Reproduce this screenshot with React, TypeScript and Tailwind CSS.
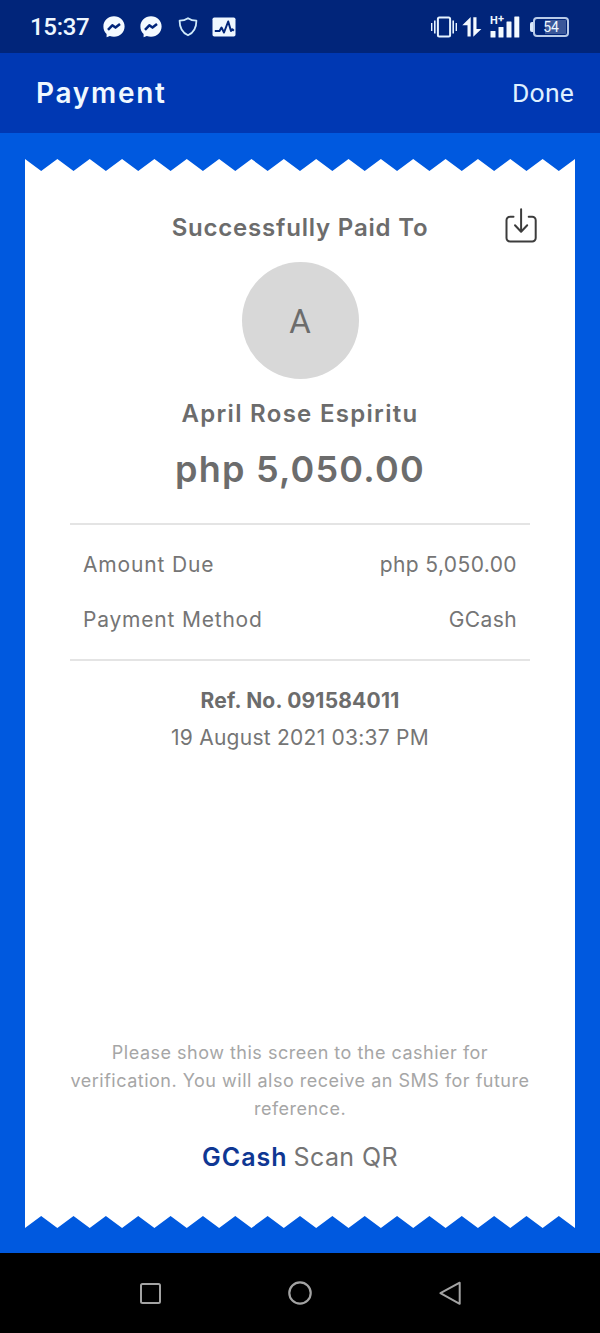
import type { ReactNode } from 'react';

const TEETH = 17;
const CARD_WIDTH = 550;
const TOOTH_HEIGHT = 12;

const details = [
  { label: 'Amount Due', value: 'php 5,050.00', labelClass: 'tracking-[0.85px]', valueClass: 'tracking-[0.4px]' },
  { label: 'Payment Method', value: 'GCash', labelClass: 'tracking-[0.8px]', valueClass: 'tracking-[0.4px]' },
];

function MessengerIcon() {
  return (
    <svg width="22" height="22" viewBox="0 0 22 22">
      <path d="M11 0.3C4.9 0.3 0.4 4.7 0.4 10.5c0 3.1 1.2 5.6 3.2 7.4v3.4l3.2-1.2c1.3.4 2.7.6 4.2.6 6.1 0 10.6-4.4 10.6-10.2S17.1 0.3 11 0.3z" fill="#f4faff" />
      <path d="M5 13.800L9.300 9.300l3.200 2.300 4.500-3.600" fill="none" stroke="#01257a" strokeWidth="2.500" strokeLinejoin="round" />
    </svg>
  );
}

function ShieldIcon() {
  return (
    <svg width="20" height="20" viewBox="0 0 20 20" fill="none" stroke="#cfeafa" strokeWidth="1.800" strokeLinejoin="round">
      <path d="M10 1.200C7.500 3 4.700 3.700 1.600 3.700c0 6.300 1.900 11.600 8.400 14.600 6.500-3 8.400-8.300 8.400-14.600C15.300 3.700 12.500 3 10 1.200z" />
    </svg>
  );
}

function ActivityIcon() {
  return (
    <svg width="24" height="20" viewBox="0 0 24 20">
      <rect x="0.500" y="0.500" width="23" height="19" rx="1.800" fill="#eef7ff" />
      <path d="M2.800 14H7.500L9.500 10.500L12 15.500L16.200 4.500L19 14L20.300 12.200L21.800 13.800" fill="none" stroke="#01257a" strokeWidth="2" strokeLinejoin="round" />
    </svg>
  );
}

function VibrateIcon() {
  return (
    <svg width="28" height="22" viewBox="0 0 28 22" fill="none" stroke="#e6f3ff">
      <rect x="7.900" y="1.400" width="12.200" height="19" rx="1.500" strokeWidth="2" />
      <path d="M4.800 4.500v13M23.200 4.500v13" strokeWidth="1.600" />
      <path d="M1.700 7v8M26.300 7v8" strokeWidth="1.400" />
    </svg>
  );
}

function DataArrowsIcon() {
  return (
    <svg width="20" height="20" viewBox="0 0 20 20" fill="#f4faff">
      <path d="M8.700 0v19.500H5.500V8.300H0.300z" />
      <path d="M11.300 0.300h3.200V12h4.900L11.300 19.800z" />
    </svg>
  );
}

function SignalIcon() {
  return (
    <div className="relative h-[22px] w-[30px]">
      <svg width="30" height="22" viewBox="0 0 30 22" fill="#f4faff">
        <rect x="0.500" y="15" width="5" height="6.500" rx="0.500" />
        <rect x="8.500" y="11" width="5" height="10.500" rx="0.500" />
        <rect x="16.500" y="5.500" width="5" height="16" rx="0.500" />
        <rect x="24.300" y="0.500" width="5" height="21" rx="0.500" />
      </svg>
      <span className="absolute left-0 top-[-1px] text-[11px] leading-[11px] font-bold">H</span>
      <span className="absolute left-[8px] top-[-3px] text-[11px] leading-[11px] font-bold">+</span>
    </div>
  );
}

function BatteryIcon() {
  return (
    <div className="flex items-center">
      <span className="h-[10px] w-[3px] rounded-l-xs bg-[#dbe9fb]" />
      <div className="flex h-[20px] w-[36px] items-center justify-center rounded-[4px] border-2 border-[#b9cbe8] p-px">
        <span className="flex h-full w-full items-center justify-center bg-linear-to-r from-[#01257a] from-30% via-[#3a5799] via-30% to-[#3a5799] text-[14px] leading-none">
          54
        </span>
      </div>
    </div>
  );
}

function DownloadIcon() {
  return (
    <svg width="32" height="36" viewBox="0 0 32 36" fill="none" stroke="#3c3c3c" strokeWidth="2" strokeLinecap="round">
      <path d="M8.500 8.800H5A3.500 3.500 0 0 0 1.500 12.300V30A3.500 3.500 0 0 0 5 33.500H27.200A3.500 3.500 0 0 0 30.700 30V12.300A3.500 3.500 0 0 0 27.200 8.800H23.700" />
      <path d="M16.100 1.200V23.500M10 17.300L16.100 23.700L22.200 17.300" strokeLinejoin="round" />
    </svg>
  );
}

// Torn paper edge along the top or bottom of the receipt
function ZigZag({ flip = false }: { flip?: boolean }) {
  const step = CARD_WIDTH / TEETH;
  const points = [`0,${TOOTH_HEIGHT + 1}`, '0,0'];
  for (let i = 0; i < TEETH; i++) {
    points.push(`${(i + 0.5) * step},${TOOTH_HEIGHT}`, `${(i + 1) * step},0`);
  }
  points.push(`${CARD_WIDTH},${TOOTH_HEIGHT + 1}`);

  return (
    <svg
      className={flip ? 'block shrink-0 rotate-180' : 'block shrink-0'}
      width={CARD_WIDTH}
      height={TOOTH_HEIGHT + 1}
    >
      <polygon points={points.join(' ')} fill="#ffffff" />
    </svg>
  );
}

function StatusBar() {
  return (
    <div className="flex h-[53px] shrink-0 items-center justify-between bg-[#01257a] pr-[31px] pl-[30px] font-[Roboto,sans-serif] text-[#eef7ff]">
      <div className="flex items-center">
        <span className="w-[73px] pt-px text-2xl font-medium tracking-[-0.300px]">15:37</span>
        <MessengerIcon />
        <span className="w-[15px]" />
        <MessengerIcon />
        <span className="w-[16px]" />
        <ShieldIcon />
        <span className="w-[14px]" />
        <ActivityIcon />
      </div>
      <div className="flex items-center">
        <VibrateIcon />
        <span className="w-[4px]" />
        <DataArrowsIcon />
        <span className="w-[8px]" />
        <SignalIcon />
        <span className="w-[10px]" />
        <BatteryIcon />
      </div>
    </div>
  );
}

function Header() {
  return (
    <header className="flex h-20 shrink-0 items-center justify-between bg-[#0038b3] pr-[26px] pl-[36px] text-[#f0f8ff]">
      <h1 className="pb-px text-[28px] font-semibold tracking-[1.700px]">Payment</h1>
      <button className="font-[Roboto,sans-serif] text-[26.500px] tracking-[0.200px] text-[#dff0ff]">Done</button>
    </header>
  );
}

function Centered({ className, children }: { className: string; children: ReactNode }) {
  return <p className={`text-center whitespace-nowrap ${className}`}>{children}</p>;
}

function Receipt() {
  return (
    <main className="flex flex-1 flex-col bg-[#0059df] px-[25px] pt-[26px] pb-[25px]">
      <ZigZag />
      <div className="flex flex-1 flex-col bg-white px-[45px] text-[#6c6c6c]">
        <div className="relative pt-[40px]">
          <Centered className="text-2xl leading-[32px] font-semibold tracking-[0.800px]">Successfully Paid To</Centered>
          <button className="absolute top-[36px] right-[-7px]">
            <DownloadIcon />
          </button>
        </div>

        <div className="mx-auto mt-[18px] flex size-[117px] items-center justify-center rounded-full bg-[#d8d8d8] pt-[3px] font-[Roboto,sans-serif] text-[33px]">
          A
        </div>

        <Centered className="mt-[19px] text-2xl leading-[32px] font-semibold tracking-[1.300px]">April Rose Espiritu</Centered>
        <Centered className="mt-[15px] text-[36px] leading-[48px] font-semibold tracking-[1.200px]">php 5,050.00</Centered>

        <div className="mt-[30px] flex h-[138px] flex-col justify-center border-y-2 border-[#e4e4e4] px-[13px] text-[21px] text-[#757575]">
          {details.map((row) => (
            <div key={row.label} className="flex h-[55px] items-center justify-between pt-px">
              <span className={row.labelClass}>{row.label}</span>
              <span className={row.valueClass}>{row.value}</span>
            </div>
          ))}
        </div>

        <Centered className="mt-[22px] text-[21px] leading-[36px] font-bold tracking-[0.200px]">Ref. No. 091584011</Centered>
        <Centered className="text-[21px] leading-[37px] tracking-[0.250px] text-[#757575]">19 August 2021 03:37 PM</Centered>

        <div className="mt-auto pb-[42px]">
          <p className="text-center text-[18px] leading-[28px] tracking-[0.500px] text-[#a6a6a6]">
            Please show this screen to the cashier for
            <br />
            verification. You will also receive an SMS for future
            <br />
            reference.
          </p>
          <div className="mt-[18px] flex items-center justify-center gap-[6px] text-[25px] leading-[32px] text-[#757575]">
            <span className="font-semibold tracking-[1px] text-[#0f3793]">GCash</span>
            <span className="tracking-[0.400px]">Scan QR</span>
          </div>
        </div>
      </div>
      <ZigZag flip />
    </main>
  );
}

function NavBar() {
  return (
    <nav className="flex h-20 shrink-0 items-center justify-between bg-black px-[137px]">
      <svg width="26" height="26" viewBox="0 0 26 26" fill="none" stroke="#a3a3a3" strokeWidth="2">
        <rect x="4" y="4" width="19" height="19" rx="1.500" />
      </svg>
      <svg width="26" height="26" viewBox="0 0 26 26" fill="none" stroke="#a3a3a3" strokeWidth="2.200">
        <circle cx="13" cy="13" r="10.700" />
      </svg>
      <svg width="26" height="26" viewBox="0 0 26 26" fill="none" stroke="#a3a3a3" strokeWidth="2" strokeLinejoin="round">
        <path d="M22.700 2.700V23.800L3.400 13.200z" />
      </svg>
    </nav>
  );
}

export default function App() {
  return (
    <div className="flex h-[1333px] w-[600px] flex-col overflow-hidden font-[Inter,sans-serif]">
      <StatusBar />
      <Header />
      <Receipt />
      <NavBar />
    </div>
  );
}
